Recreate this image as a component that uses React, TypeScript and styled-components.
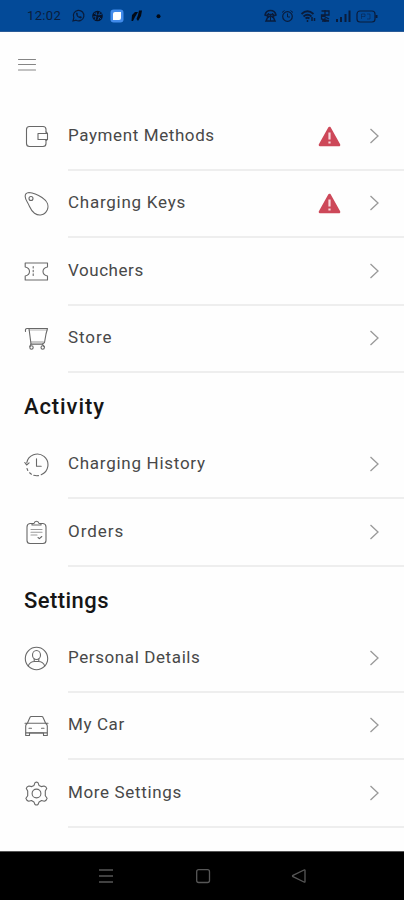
import React from "react";
import styled, { createGlobalStyle } from "styled-components";

const GlobalStyle = createGlobalStyle`
  * { box-sizing: border-box; }
  body { margin: 0; background: #fefefe; }
`;

const Screen = styled.div`
  width: 404px;
  height: 900px;
  display: flex;
  flex-direction: column;
  overflow: hidden;
  background: #fefefe;
  font-family: Roboto, "Liberation Sans", sans-serif;
  color: #333;
`;

const StatusBar = styled.header`
  height: 32px;
  flex: none;
  display: flex;
  align-items: center;
  padding: 0 26px 0 27px;
  background: #034a98;
  border-bottom: 1px solid #2a5b98;
  color: #0a1c3b;
`;

const Clock = styled.span`
  width: 44px;
  font-size: 13px;
  line-height: 32px;
  letter-spacing: 0.35px;
`;

const StatusIcons = styled.svg`
  display: block;
  flex: none;
  fill: none;
  stroke: currentColor;
`;

const Spacer = styled.div`
  flex: 1;
`;

const TopBar = styled.div`
  height: 71px;
  flex: none;
  padding: 25px 18px;
`;

const MenuButton = styled.button`
  display: block;
  padding: 0;
  border: 0;
  background: none;
  color: #858585;
`;

const Content = styled.main`
  flex: 1;
`;

const Heading = styled.h2<{ $spacing: number }>`
  height: 58.5px;
  margin: 0;
  padding: 5px 0 0 24px;
  font-size: 22px;
  font-weight: 500;
  line-height: 58px;
  letter-spacing: ${(p) => p.$spacing}px;
  color: #161616;
`;

const Row = styled.div`
  height: 67.5px;
  display: flex;
  padding-left: 24px;
`;

const IconCell = styled.div`
  width: 44px;
  padding-top: 20.5px;
  color: #686868;
`;

const LineIcon = styled.svg`
  display: block;
  fill: none;
  stroke: currentColor;
  stroke-width: 1.1;
  stroke-linecap: round;
  stroke-linejoin: round;
`;

const RowBody = styled.div`
  flex: 1;
  display: flex;
  align-items: center;
  padding: 0 24px 2px 0;
  border-bottom: 2px solid #eeeeee;
`;

const Label = styled.span<{ $spacing: number }>`
  flex: 1;
  font-size: 17px;
  line-height: 24px;
  letter-spacing: ${(p) => p.$spacing}px;
  color: #484848;
  white-space: nowrap;
`;

const Warning = styled.svg`
  display: block;
  margin: 3px 28.5px 0 0;
`;

const Chevron = styled.svg`
  display: block;
  margin-top: 2px;
  fill: none;
  stroke: #999;
  stroke-width: 1.3;
`;

const NavBar = styled.nav`
  height: 49px;
  flex: none;
  display: flex;
  align-items: center;
  justify-content: space-between;
  padding: 0 97px 0 98px;
  border-top: 1px solid #555;
  background: #000;
  color: #575757;
`;

const icons: Record<string, React.ReactNode> = {
  wallet: (
    <>
      <path d="M22 8V5.5Q22 2.5 19 2.5H5.5Q2.5 2.5 2.5 5.5V19.5Q2.5 22.5 5.5 22.5H19Q22 22.5 22 19.5V16" />
      <path d="M23.5 9.5V15.5H14V9.5ZM22 8l1.5 1.5M22 16.5l1.5-1" />
    </>
  ),
  key: (
    <>
      <path d="M1.2 5.5Q1 1.8 5 1.5C9.5 2 14 4 18 6.5C23.5 10 25 15 23.2 19C20.5 24.5 15 25.3 10.5 22.3C6.5 19.5 6 15.5 3.5 11.5Q1.2 8 1.2 5.5Z" />
      <circle cx="7" cy="7.5" r="2" />
    </>
  ),
  voucher: (
    <>
      <path d="M1.2 4H23.5V8Q19 9 19 12.5Q19 16 23.5 17V21H1.2V17Q5.5 16 5.5 12.5Q5.5 9 1.2 8Z" />
      <path d="M9.2 7.5V18" strokeDasharray="1.5 2.2" />
    </>
  ),
  cart: (
    <>
      <path d="M1.5 5.5Q1 2.5 3 2.5H23.5L22 8L20.5 16.5L18.5 18M5 2.5L7 18.3H18.5L20.5 21" />
      <path d="M5 4H23" opacity=".5" />
      <path d="M7 15H20L18.5 18.3H7Z" fill="currentColor" stroke="none" opacity=".35" />
      <path d="M7 18L5.8 20.5" />
      <circle cx="7.5" cy="21.5" r="1.7" />
      <circle cx="18.7" cy="21.5" r="1.7" />
    </>
  ),
  history: (
    <>
      <path d="M2.7 11A10.7 10.7 0 1 1 17.2 22.7M14.5 23.6Q12 24 9.7 23.3M7.4 22.2L5.6 20.8M3.8 18.5L3 16.5" />
      <path d="M.8 10.5L2.6 13L5.1 10.8M12.5 6.8V14.2H17.2" />
    </>
  ),
  orders: (
    <>
      <path d="M8 3.5H6Q3 3.8 3 7V20.5Q3 23.5 6 23.5H19Q22 23.5 22 20.5V7Q22 3.8 19 3.5H17" />
      <path d="M8 5V3.5H10Q10.5 1.2 12.5 1.2Q14.5 1.2 15 3.5H17V5ZM14 17.5L15.4 18.7L17.8 16.5" />
      <path d="M7 9.5H18M7 12.2H18M7 15H13" opacity=".65" />
    </>
  ),
  person: (
    <>
      <circle cx="12.5" cy="12.5" r="11.2" />
      <ellipse cx="12.5" cy="9" rx="4" ry="4.5" />
      <path d="M4.2 20Q6 15.5 10.5 15.5H14.5Q19 15.5 20.8 20M10.2 12.7V15.5M14.8 12.7V15.5" />
    </>
  ),
  car: (
    <>
      <path d="M3.5 10L6 4.3Q6.3 3.5 7.3 3.5H17.7Q18.7 3.5 19 4.3L21.5 10M1 10.3H24M3.2 10.5Q1.7 11.5 1.7 13V22.5H5.5V20H19.5V22.5H23.3V13Q23.3 11.5 21.8 10.5" />
      <path d="M2 19.9H23M5 15.2H7.5M17.5 15.2H20" />
    </>
  ),
  gear: (
    <>
      <path d="M10 4.4L11 1.6Q12.5.7 14 1.6L15 4.4L17.2 5.6L20.1 5Q22.2 5.6 22.7 7.4L21.3 10.1V14.8L23.1 17.3Q22.5 19.6 20.3 20.2L17.5 19.5L15.1 20.9L14 23.5Q12.5 24.4 11 23.5L9.9 20.9L7.5 19.5L4.7 20.2Q2.5 19.6 1.9 17.3L3.7 14.8V10.1L2.3 7.4Q2.8 5.6 4.9 5L7.8 5.6Z" />
      <circle cx="12.5" cy="12.5" r="4.4" />
    </>
  ),
};

type Item = { label: string; icon: string; spacing: number; alert?: boolean };

const sections: { title?: string; spacing?: number; items: Item[] }[] = [
  {
    items: [
      { label: "Payment Methods", icon: "wallet", spacing: 0.6, alert: true },
      { label: "Charging Keys", icon: "key", spacing: 0.75, alert: true },
      { label: "Vouchers", icon: "voucher", spacing: 0.55 },
      { label: "Store", icon: "cart", spacing: 0.9 },
    ],
  },
  {
    title: "Activity",
    spacing: 0.9,
    items: [
      { label: "Charging History", icon: "history", spacing: 0.72 },
      { label: "Orders", icon: "orders", spacing: 0.95 },
    ],
  },
  {
    title: "Settings",
    spacing: 0.45,
    items: [
      { label: "Personal Details", icon: "person", spacing: 0.6 },
      { label: "My Car", icon: "car", spacing: 0.6 },
      { label: "More Settings", icon: "gear", spacing: 0.65 },
    ],
  },
];

function MenuRow({ item }: { item: Item }) {
  return (
    <Row>
      <IconCell>
        <LineIcon width="25" height="25" viewBox="0 0 25 25">{icons[item.icon]}</LineIcon>
      </IconCell>
      <RowBody>
        <Label $spacing={item.spacing}>{item.label}</Label>
        {item.alert && (
          <Warning width="23" height="21" viewBox="0 0 23 21">
            <path d="M11.5 2L21 19H2Z" fill="#cd4859" stroke="#cd4859" strokeWidth="2.6" strokeLinejoin="round" />
            <path d="M11.5 6.5V13.5M11.5 15.5V17.5" stroke="#f7d8dc" strokeWidth="2.2" />
          </Warning>
        )}
        <Chevron width="11" height="16" viewBox="0 0 11 16">
          <path d="M1.5 1L9 8L1.5 15" />
        </Chevron>
      </RowBody>
    </Row>
  );
}

export default function App() {
  return (
    <Screen>
      <GlobalStyle />
      <StatusBar>
        <Clock>12:02</Clock>
        <StatusIcons width="94" height="16" viewBox="0 0 94 16">
          <path d="M2 13L2.8 9.8A5.3 5.3 0 1 1 5 12.2Z" strokeWidth="1.2" />
          <path d="M5 5Q5 9.5 10 10.5L11 9L9 8L8 8.8L6.5 7L7 6L6 4.5Z" fill="currentColor" stroke="none" />
          <circle cx="26.5" cy="8" r="5.3" fill="#07132a" stroke="none" />
          <path d="M23 5L26 7L25 4M29 4L27.5 7L31 6M22 9L25 8.5L24 12M27 12L28 9L30 11" stroke="#034a98" strokeWidth=".9" />
          <rect x="39.5" y="1.5" width="13" height="13" rx="3.2" fill="#428bea" stroke="none" />
          <path d="M44 4H50V10Q50 12 48 12H42V6Q42 4 44 4Z" fill="#fff" stroke="none" />
          <path d="M60.5 13L61 7L64 4H67L64 9L62 13ZM65.5 11L67 7L68 2.5H71L70 8L67 13Z" fill="#020915" stroke="none" />
          <circle cx="87.5" cy="8.3" r="2" fill="#020915" stroke="none" />
        </StatusIcons>
        <Spacer />
        <StatusIcons width="114" height="16" viewBox="0 0 114 16">
          <path d="M1 7Q2 2.5 6.5 2.5Q11 2.5 12 7L9.5 8V6.5H3.5V8L1 7ZM2 13L4 8.5H9L11 13Z" strokeWidth="1.5" />
          <path d="M4 5L9 10M9 5L4 10M6.5 7V13" />
          <circle cx="23.5" cy="8.5" r="4.8" strokeWidth="1.2" />
          <path d="M18 4.5L20.5 2.5M26.5 2.5L29 4.5M23.5 5.5V9H26" />
          <path d="M37.5 6Q43.5.5 49.5 6M39.5 8.5Q43.5 5 47.5 8.5M41.5 10.5Q43.5 9 45.5 10.5" strokeWidth="1.8" />
          <path d="M43.5 12V14M48 9V13M50.5 10V13" strokeWidth="1.5" />
          <path d="M57.5 3H65V7H57.5V11L65 13M57.5 7L65 11M58 13H65M61 2V14" strokeWidth="1.3" />
          <path d="M73 14V11M77 14V9M81.5 14V6M85.5 14V2.5" strokeWidth="2" />
          <rect x="93" y="3" width="18" height="11" rx="3" strokeWidth="1.2" />
          <path d="M112.5 7V10" strokeWidth="2" />
          <path d="M97.5 6V11M97.5 6H101V8.5H97.5M103 6H106V11H103" strokeWidth=".8" opacity=".6" />
        </StatusIcons>
      </StatusBar>
      <TopBar>
        <MenuButton aria-label="Menu">
          <LineIcon width="18" height="16" viewBox="0 0 18 16">
            <path d="M.5 2.5H17.5M.5 7.5H17.5M.5 13H17.5" />
          </LineIcon>
        </MenuButton>
      </TopBar>
      <Content>
        {sections.map((section, index) => (
          <section key={index}>
            {section.title && <Heading $spacing={section.spacing ?? 0}>{section.title}</Heading>}
            {section.items.map((item) => (
              <MenuRow key={item.label} item={item} />
            ))}
          </section>
        ))}
      </Content>
      <NavBar>
        <StatusIcons width="16" height="16" viewBox="0 0 16 16">
          <path d="M1 2H15M1 8H15M1 14H15" strokeWidth="1.7" />
        </StatusIcons>
        <StatusIcons width="16" height="16" viewBox="0 0 16 16">
          <rect x="1.7" y="1.7" width="12.8" height="12.8" rx="2" strokeWidth="1.3" />
        </StatusIcons>
        <StatusIcons width="16" height="16" viewBox="0 0 16 16">
          <path d="M14 2.3V13.7Q14 14.5 13 14L2 8.7Q1 8 2 7.3L13 2Q14 1.5 14 2.3Z" strokeWidth="1.3" />
        </StatusIcons>
      </NavBar>
    </Screen>
  );
}
